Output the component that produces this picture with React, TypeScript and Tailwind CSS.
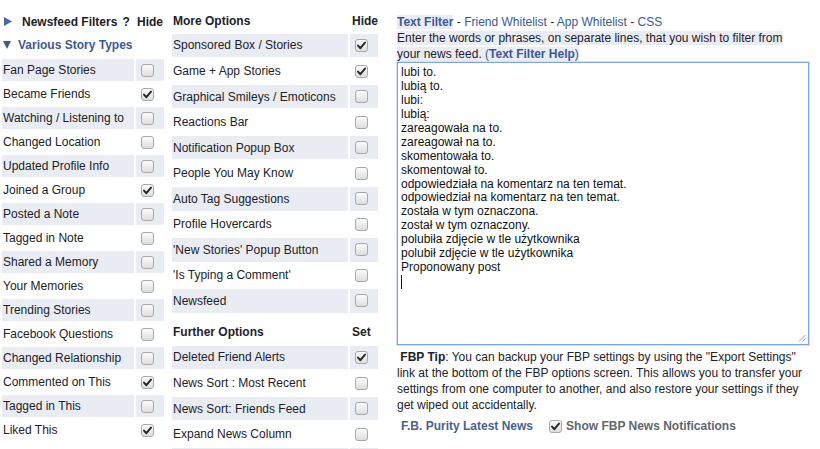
import React from "react";

const STRIPE = "bg-[#e9ecf3]";

function Box({ checked }: { checked: boolean }) {
  return (
    <div className="w-[13px] h-[13px] rounded-[3px] border border-[#a9a9a9] bg-gradient-to-b from-[#fbfbfb] to-[#dedede] flex items-center justify-center">
      {checked && (
        <svg width="11" height="11" viewBox="0 0 11 11">
          <path d="M2 5.6 L4.4 8.2 L9 2.6" fill="none" stroke="#2a2a2a" strokeWidth="2" strokeLinecap="round" strokeLinejoin="round" />
        </svg>
      )}
    </div>
  );
}

function Row({
  label,
  checked,
  striped,
  labelW,
  h,
}: {
  label: string;
  checked?: boolean;
  striped: boolean;
  labelW: string;
  h: string;
}) {
  return (
    <div className={`flex mt-[2px] ${h}`}>
      <div className={`${labelW} ${striped ? STRIPE : ""} pl-[1px] flex items-center whitespace-nowrap overflow-hidden`}>
        {label}
      </div>
      <div className={`w-[28px] ml-[2px] ${striped ? STRIPE : ""} pl-[5px] flex items-center`}>
        {label !== "" && <Box checked={!!checked} />}
      </div>
    </div>
  );
}

const leftRows: [string, boolean][] = [
  ["Fan Page Stories", false],
  ["Became Friends", true],
  ["Watching / Listening to", false],
  ["Changed Location", false],
  ["Updated Profile Info", false],
  ["Joined a Group", true],
  ["Posted a Note", false],
  ["Tagged in Note", false],
  ["Shared a Memory", false],
  ["Your Memories", false],
  ["Trending Stories", false],
  ["Facebook Questions", false],
  ["Changed Relationship", false],
  ["Commented on This", true],
  ["Tagged in This", false],
  ["Liked This", true],
];

const moreRows: [string, boolean][] = [
  ["Sponsored Box / Stories", true],
  ["Game + App Stories", true],
  ["Graphical Smileys / Emoticons", false],
  ["Reactions Bar", false],
  ["Notification Popup Box", false],
  ["People You May Know", false],
  ["Auto Tag Suggestions", false],
  ["Profile Hovercards", false],
  ["'New Stories' Popup Button", false],
  ["'Is Typing a Comment'", false],
  ["Newsfeed", false],
];

const furtherRows: [string, boolean][] = [
  ["Deleted Friend Alerts", true],
  ["News Sort : Most Recent", false],
  ["News Sort: Friends Feed", false],
  ["Expand News Column", false],
  ["", false],
];

const filterLines = [
  "lubi to.",
  "lubią to.",
  "lubi:",
  "lubią:",
  "zareagowała na to.",
  "zareagował na to.",
  "skomentowała to.",
  "skomentował to.",
  "odpowiedziała na komentarz na ten temat.",
  "odpowiedział na komentarz na ten temat.",
  "została w tym oznaczona.",
  "został w tym oznaczony.",
  "polubiła zdjęcie w tle użytkownika",
  "polubił zdjęcie w tle użytkownika",
  "Proponowany post",
];

export default function App() {
  return (
    <div className="w-[820px] h-[449px] overflow-hidden bg-white font-['Liberation_Sans',Arial,sans-serif] text-[12px] text-[#1d2129] flex items-start">
      {/* Left column */}
      <div className="ml-[2px] w-[162px] flex flex-col">
        <div className="h-[33px] pt-[10px] flex items-center font-bold">
          <div className="w-[132px] flex items-center pl-[2px]">
            <svg width="8" height="9" viewBox="0 0 8 9" className="mr-[10px]">
              <polygon points="0,0 8,4.5 0,9" fill="#4b67a1" />
            </svg>
            <span>Newsfeed Filters</span>
            <span className="ml-[5px]">?</span>
          </div>
          <div className="ml-[2px] pl-[1px]">Hide</div>
        </div>
        <div className="h-[24px] flex items-center font-bold text-[#3b5998] pl-[1px]">
          <svg width="8" height="8" viewBox="0 0 8 8" className="mr-[7px]">
            <polygon points="0,0 8,0 4,8" fill="#3b5998" />
          </svg>
          Various Story Types
        </div>
        {leftRows.map(([l, c], i) => (
          <Row key={l} label={l} checked={c} striped={i % 2 === 0} labelW="w-[132px]" h="h-[22px]" />
        ))}
      </div>

      {/* Middle column */}
      <div className="ml-[8px] w-[206px] flex flex-col">
        <div className="h-[31.7px] pt-[10px] flex items-center font-bold">
          <div className="w-[176px] pl-[1px]">More Options</div>
          <div className="ml-[2px] pl-[2px]">Hide</div>
        </div>
        {moreRows.map(([l, c], i) => (
          <Row key={l} label={l} checked={c} striped={i % 2 === 0} labelW="w-[176px]" h="h-[23.55px]" />
        ))}
        <div className="mt-[2px] h-[29px] pt-[6px] flex items-center font-bold">
          <div className="w-[176px] pl-[1px]">Further Options</div>
          <div className="ml-[2px] pl-[2px]">Set</div>
        </div>
        {furtherRows.map(([l, c], i) => (
          <Row key={l + i} label={l} checked={c} striped={i % 2 === 0} labelW="w-[176px]" h="h-[23.55px]" />
        ))}
      </div>

      {/* Right column */}
      <div className="ml-[19px] w-[412px] pt-[14px] flex flex-col">
        <div className="leading-[16px] text-[#3b5998]">
          <span className="font-bold bg-[#e9ecf3]">Text Filter</span>
          <span className="text-[#1d2129]"> - </span>
          <span>Friend Whitelist</span>
          <span className="text-[#1d2129]"> - </span>
          <span>App Whitelist</span>
          <span className="text-[#1d2129]"> - </span>
          <span>CSS</span>
        </div>
        <div className="leading-[16px]">
          <span className="bg-[#e9ecf3]">
            Enter the words or phrases, on separate lines, that you wish to filter from your news feed.{" "}
            <span className="text-[#3b5998]">
              (<span className="font-bold">Text Filter Help</span>)
            </span>
          </span>
        </div>
        <div className="relative h-[283px] border border-[#7ea6e4] shadow-[0_0_0_1px_#d3e1f7] pl-[3px] pt-[3px] leading-[13.93px] text-[#111]">
          {filterLines.map((t) => (
            <div key={t} className="whitespace-pre">
              {t}
            </div>
          ))}
          <div className="h-[13.93px] flex items-center">
            <div className="w-[1px] h-[14px] bg-[#111]" />
          </div>
          <svg width="8" height="8" viewBox="0 0 8 8" className="absolute right-[2px] bottom-[2px]">
            <line x1="1" y1="7.5" x2="7.5" y2="1" stroke="#9a9a9a" strokeWidth="1" />
            <line x1="4.5" y1="7.5" x2="7.5" y2="4.5" stroke="#9a9a9a" strokeWidth="1" />
          </svg>
        </div>
        <p className="mt-[4px] leading-[16px]">
          {"\u00a0"}
          <b>FBP Tip</b>: You can backup your FBP settings by using the "Export Settings" link at the bottom of the FBP options screen. This allows you to transfer your settings from one computer to another, and also restore your settings if they get wiped out accidentally.
        </p>
        <div className="mt-[3px] h-[20px] flex items-center font-bold">
          <span className="ml-[4px] text-[#4b5f91]">F.B. Purity Latest News</span>
          <div className="ml-[16px]">
            <Box checked={true} />
          </div>
          <span className="ml-[4px] text-[#616770]">Show FBP News Notifications</span>
        </div>
      </div>
    </div>
  );
}
